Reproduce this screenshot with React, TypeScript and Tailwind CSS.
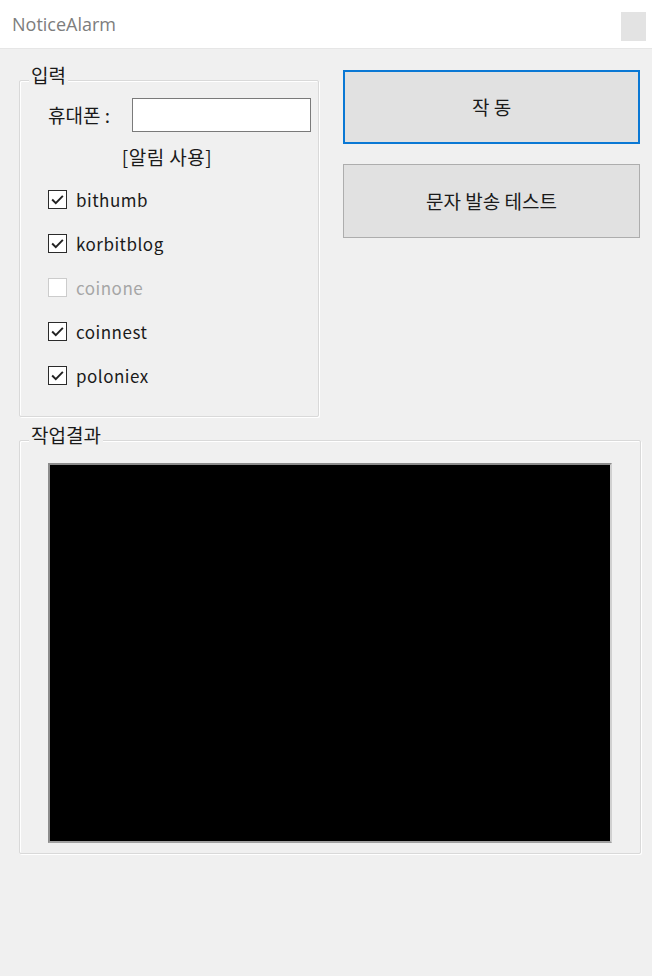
const FONT = "font-['Noto_Sans_CJK_KR','Noto_Sans',sans-serif]";

const exchanges = [
  { name: 'bithumb', checked: true, enabled: true },
  { name: 'korbitblog', checked: true, enabled: true },
  { name: 'coinone', checked: false, enabled: false },
  { name: 'coinnest', checked: true, enabled: true },
  { name: 'poloniex', checked: true, enabled: true },
];

function CheckBox({ checked, enabled }: { checked: boolean; enabled: boolean }) {
  return (
    <span
      className={`flex h-[19px] w-[19px] items-center justify-center border-[1.5px] bg-white ${
        enabled ? 'border-[#2b2b2b]' : 'border-[#cccccc]'
      }`}
    >
      {checked && (
        <svg width="15" height="15" viewBox="0 0 14 14" fill="none">
          <path d="M2 7 L5.4 10.4 L12 3.6" stroke="#222222" strokeWidth="1.8" />
        </svg>
      )}
    </span>
  );
}

function GroupBox({ title, className, children }: { title: string; className: string; children: React.ReactNode }) {
  return (
    <div className={`relative rounded-[2px] border border-[#d9d9d9] shadow-[inset_1px_1px_0_#ffffff,1px_1px_0_#ffffff] ${className}`}>
      <span className="absolute left-[9px] top-[-19px] bg-[#f0f0f0] px-[2px] text-[19px] leading-[26px] text-[#1a1a1a]">
        {title}
      </span>
      {children}
    </div>
  );
}

export default function App() {
  return (
    <div className={`h-[976px] w-[652px] overflow-hidden bg-[#f0f0f0] ${FONT}`}>
      <div className="flex h-[49px] items-center justify-between border-b border-[#e6e6e6] bg-white pl-[12px] pr-[6px]">
        <span className="font-['Open_Sans',sans-serif] text-[18px] text-[#7d7d7d]">NoticeAlarm</span>
        <div className="mt-[5px] h-[29px] w-[25px] bg-[#e3e3e3]" />
      </div>

      <div className="flex gap-[24px] pl-[19px] pt-[21px]">
        <GroupBox title="입력" className="mt-[10px] h-[337px] w-[300px]">
          <div className="flex items-center pl-[28px] pt-[17px]">
            <span className="w-[84px] text-[19px] text-[#1a1a1a]">휴대폰 :</span>
            <input className="h-[34px] w-[179px] border border-[#7a7a7a] bg-white outline-none" />
          </div>
          <div className="pt-[11px] pr-[4px] text-center text-[19px] leading-[28px] tracking-[0.5px] text-[#1a1a1a]">[알림 사용]</div>
          <div className="flex flex-col gap-[17px] pl-[28px] pt-[15px]">
            {exchanges.map((ex) => (
              <div key={ex.name} className="flex h-[27px] items-center gap-[9px]">
                <CheckBox checked={ex.checked} enabled={ex.enabled} />
                <span className={`text-[17px] tracking-[0.5px] ${ex.enabled ? 'text-[#1a1a1a]' : 'text-[#a6a6a6]'}`}>
                  {ex.name}
                </span>
              </div>
            ))}
          </div>
        </GroupBox>

        <div className="flex flex-col gap-[20px]">
          <button className="flex h-[74px] w-[297px] items-center justify-center border-2 border-[#0a78d4] bg-[#e1e1e1] text-[19px] text-[#1a1a1a]">
            작 동
          </button>
          <button className="flex h-[74px] w-[297px] items-center justify-center border border-[#adadad] bg-[#e1e1e1] text-[19px] text-[#1a1a1a]">
            문자 발송 테스트
          </button>
        </div>
      </div>

      <div className="pl-[19px] pt-[23px]">
        <GroupBox title="작업결과" className="h-[414px] w-[622px] px-[28px] pb-[10px] pt-[22px]">
          <div className="h-full w-full border-2 border-t-[#8c8c8c] border-l-[#8c8c8c] border-r-[#d0d0d0] border-b-[#a0a0a0] bg-black" />
        </GroupBox>
      </div>
    </div>
  );
}
